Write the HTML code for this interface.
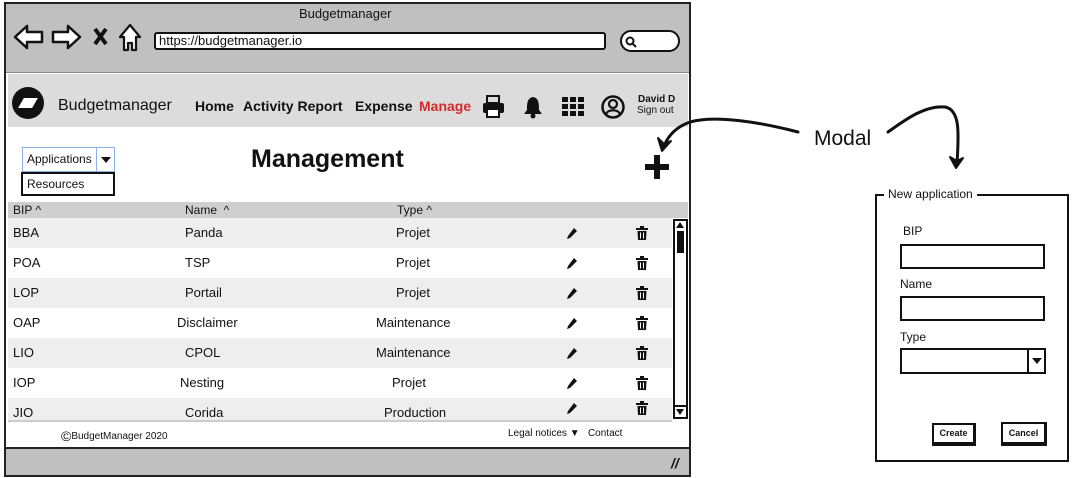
<!DOCTYPE html>
<html><head><meta charset="utf-8"><style>
*{margin:0;padding:0;box-sizing:border-box}
body{width:1073px;height:478px;background:#fff;position:relative;overflow:hidden;font-family:"Liberation Sans",sans-serif;color:#111}
.a{position:absolute}
.t{position:absolute;font-size:13px;white-space:nowrap}
.nav{position:absolute;font-size:14px;font-weight:bold;top:98px}
</style></head><body>
<div class="a" style="left:4px;top:2px;width:687px;height:475px;border:2px solid #222;background:#c0c0c0"></div>
<div class="t" style="left:299px;top:6px;font-size:13px">Budgetmanager</div>
<svg class="a" style="left:12px;top:20px" width="135" height="34" viewBox="0 0 135 34">
<path d="M3 17 L15 6 V12 H30 V22 H15 V28 Z" fill="#fff" stroke="#111" stroke-width="2.5" stroke-linejoin="round"/>
<path d="M68 17 L56 6 V12 H41 V22 H56 V28 Z" fill="#fff" stroke="#111" stroke-width="2.5" stroke-linejoin="round"/>
<path d="M83 9 L94 24 M94 9 L83 24" stroke="#111" stroke-width="4"/>
<path d="M108 17 L118 5 L128 17 H124 V30 H120 V23 H116 V30 H112 V17 Z" fill="#fff" stroke="#111" stroke-width="2.2" stroke-linejoin="round"/>
</svg>
<div class="a" style="left:154px;top:32px;width:452px;height:18px;border:2px solid #111;border-radius:3px;background:#fff"></div>
<div class="t" style="left:159px;top:33px;font-size:13px">https://budgetmanager.io</div>
<div class="a" style="left:620px;top:30px;width:60px;height:22px;border:2px solid #111;border-radius:11px;background:#fff"></div>
<svg class="a" style="left:624px;top:35px" width="14" height="14"><circle cx="6" cy="6" r="3.5" fill="none" stroke="#111" stroke-width="2"/><path d="M8.5 8.5 L12 12" stroke="#111" stroke-width="2"/></svg>
<div class="a" style="left:6px;top:72px;width:683px;height:376px;background:#fff;border-top:1px solid #888"></div>
<div class="a" style="left:8px;top:74px;width:680px;height:53px;background:#dcdcdc"></div>
<div class="a" style="left:12px;top:87px;width:32px;height:32px;border-radius:50%;background:#111"></div>
<div class="a" style="left:21px;top:98px;width:14px;height:10px;background:#fff;transform:skewX(-30deg)"></div>
<div class="t" style="left:58px;top:97px;font-size:16px">Budgetmanager</div>
<div class="nav" style="left:195px">Home</div>
<div class="nav" style="left:243px">Activity Report</div>
<div class="nav" style="left:355px">Expense</div>
<div class="nav" style="left:419px;color:#d42a2a">Manage</div>
<svg class="a" style="left:482px;top:94px" width="200" height="28">
<rect x="5" y="2" width="12" height="7" fill="none" stroke="#111" stroke-width="2"/><rect x="1" y="9" width="21" height="10" rx="2" fill="#111"/><rect x="5" y="15" width="12" height="8" fill="#fff" stroke="#111" stroke-width="2"/>
<path d="M51 1 L51 3 C45 4 45 10 45 16 L42 20 H60 L57 16 C57 10 57 4 51 3Z" fill="#111"/><circle cx="51" cy="22" r="2.5" fill="#111"/>
<g fill="#111"><rect x="80" y="3" width="6" height="5"/><rect x="88" y="3" width="6" height="5"/><rect x="96" y="3" width="6" height="5"/><rect x="80" y="10" width="6" height="5"/><rect x="88" y="10" width="6" height="5"/><rect x="96" y="10" width="6" height="5"/><rect x="80" y="17" width="6" height="5"/><rect x="88" y="17" width="6" height="5"/><rect x="96" y="17" width="6" height="5"/></g>
<circle cx="131" cy="13" r="10.5" fill="none" stroke="#111" stroke-width="2.5"/><circle cx="131" cy="10" r="4" fill="none" stroke="#111" stroke-width="2.2"/><path d="M124 20 C126 15 136 15 138 20" fill="none" stroke="#111" stroke-width="2.2"/>
</svg>
<div class="t" style="left:638px;top:94px;font-size:10px;font-weight:bold">David D</div>
<div class="t" style="left:637px;top:105px;font-size:10px">Sign out</div>
<div class="a" style="left:22px;top:147px;width:93px;height:25px;border:1px solid #8eb0ea;background:#fff"></div>
<div class="a" style="left:96px;top:147px;width:1px;height:25px;background:#8eb0ea"></div>
<div class="t" style="left:27px;top:152px;font-size:12px;width:68px;overflow:hidden">Applications</div>
<div class="a" style="left:101px;top:157px;border-left:5px solid transparent;border-right:5px solid transparent;border-top:6px solid #111"></div>
<div class="a" style="left:21px;top:172px;width:94px;height:24px;border:2px solid #111;background:#fff"></div>
<div class="t" style="left:27px;top:177px;font-size:12px">Resources</div>
<div class="t" style="left:251px;top:145px;font-size:25px;font-weight:bold">Management</div>
<div class="a" style="left:645px;top:164px;width:24px;height:6px;background:#111"></div>
<div class="a" style="left:654px;top:155px;width:6px;height:24px;background:#111"></div>
<div class="a" style="left:8px;top:202px;width:680px;height:16px;background:#cfcfcf"></div>
<div class="t" style="left:13px;top:203px;font-size:12px">BIP ^</div>
<div class="t" style="left:185px;top:203px;font-size:12px">Name &nbsp;^</div>
<div class="t" style="left:397px;top:203px;font-size:12px">Type ^</div>
<div class="a" style="left:8px;top:218px;width:664px;height:30px;background:#eee"></div>
<div class="a" style="left:8px;top:278px;width:664px;height:30px;background:#eee"></div>
<div class="a" style="left:8px;top:338px;width:664px;height:30px;background:#eee"></div>
<div class="a" style="left:8px;top:398px;width:664px;height:22px;background:#eee"></div>
<div class="t" style="left:13px;top:225px">BBA</div><div class="t" style="left:185px;top:225px">Panda</div><div class="t" style="left:396px;top:225px">Projet</div>
<div class="t" style="left:13px;top:255px">POA</div><div class="t" style="left:185px;top:255px">TSP</div><div class="t" style="left:396px;top:255px">Projet</div>
<div class="t" style="left:13px;top:285px">LOP</div><div class="t" style="left:185px;top:285px">Portail</div><div class="t" style="left:396px;top:285px">Projet</div>
<div class="t" style="left:13px;top:315px">OAP</div><div class="t" style="left:177px;top:315px">Disclaimer</div><div class="t" style="left:376px;top:315px">Maintenance</div>
<div class="t" style="left:13px;top:345px">LIO</div><div class="t" style="left:185px;top:345px">CPOL</div><div class="t" style="left:376px;top:345px">Maintenance</div>
<div class="t" style="left:13px;top:375px">IOP</div><div class="t" style="left:180px;top:375px">Nesting</div><div class="t" style="left:392px;top:375px">Projet</div>
<div class="t" style="left:13px;top:405px">JIO</div><div class="t" style="left:185px;top:405px">Corida</div><div class="t" style="left:384px;top:405px">Production</div>
<svg class="a" style="left:560px;top:218px" width="100" height="202">
<defs><g id="p"><path d="M7 2 L10 5 L3 12 L0 13 L1 10 Z" fill="#111"/></g>
<g id="d"><rect x="0" y="2" width="12" height="2" fill="#111"/><rect x="4" y="0" width="4" height="2" fill="#111"/><path d="M1.5 5 H10.5 L10 14 H2 Z" fill="#111"/><path d="M4.5 6.5V12.5M7.5 6.5V12.5" stroke="#fff" stroke-width="1"/></g></defs>
<use href="#p" x="7" y="8"/><use href="#d" x="76" y="8"/>
<use href="#p" x="7" y="38"/><use href="#d" x="76" y="38"/>
<use href="#p" x="7" y="68"/><use href="#d" x="76" y="68"/>
<use href="#p" x="7" y="98"/><use href="#d" x="76" y="98"/>
<use href="#p" x="7" y="128"/><use href="#d" x="76" y="128"/>
<use href="#p" x="7" y="158"/><use href="#d" x="76" y="158"/>
<use href="#p" x="7" y="183"/><use href="#d" x="76" y="183"/>
</svg>
<div class="a" style="left:673px;top:219px;width:15px;height:200px;border:2px solid #111;background:#fff"></div>
<div class="a" style="left:676px;top:222px;border-left:4px solid transparent;border-right:4px solid transparent;border-bottom:6px solid #111"></div>
<div class="a" style="left:677px;top:231px;width:7px;height:22px;background:#111"></div>
<div class="a" style="left:673px;top:405px;width:15px;height:2px;background:#111"></div>
<div class="a" style="left:676px;top:409px;border-left:4px solid transparent;border-right:4px solid transparent;border-top:6px solid #111"></div>
<div class="a" style="left:8px;top:420px;width:664px;height:2px;background:#ccc"></div>
<div class="t" style="left:61px;top:428px;font-size:10px"><span style="font-size:14px;vertical-align:-2px">©</span>BudgetManager 2020</div>
<div class="t" style="left:508px;top:428px;font-size:10px">Legal notices ▼ &nbsp; Contact</div>
<div class="a" style="left:4px;top:447px;width:687px;height:2px;background:#222"></div>
<div class="t" style="left:671px;top:455px;font-size:14px;font-weight:bold;font-style:italic">//</div>
<svg class="a" style="left:0;top:0" width="1073" height="478">
<path d="M798 132 C760 122 715 115 690 122 C676 127 668 136 664 146" fill="none" stroke="#111" stroke-width="3" stroke-linecap="round"/>
<path d="M658 138 L662 151 L671 141 L664 144 Z" fill="#111" stroke="#111" stroke-width="2" stroke-linejoin="round"/>
<path d="M888 132 C905 120 925 105 945 107 C962 110 958 140 957 165" fill="none" stroke="#111" stroke-width="3" stroke-linecap="round"/>
<path d="M950 157 L956 168 L963 158 L957 161 Z" fill="#111" stroke="#111" stroke-width="2" stroke-linejoin="round"/>
</svg>
<div class="t" style="left:814px;top:127px;font-size:21px">Modal</div>
<div class="a" style="left:875px;top:194px;width:194px;height:268px;border:2px solid #111"></div>
<div class="t" style="left:884px;top:187px;font-size:12px;background:#fff;padding:0 4px">New application</div>
<div class="t" style="left:903px;top:224px;font-size:12px">BIP</div>
<div class="a" style="left:900px;top:244px;width:145px;height:25px;border:2px solid #111"></div>
<div class="t" style="left:900px;top:277px;font-size:12px">Name</div>
<div class="a" style="left:900px;top:296px;width:145px;height:25px;border:2px solid #111"></div>
<div class="t" style="left:900px;top:330px;font-size:12px">Type</div>
<div class="a" style="left:900px;top:348px;width:146px;height:26px;border:2px solid #111"></div>
<div class="a" style="left:1027px;top:348px;width:2px;height:26px;background:#111"></div>
<div class="a" style="left:1032px;top:358px;border-left:5px solid transparent;border-right:5px solid transparent;border-top:6px solid #111"></div>
<div class="a" style="left:932px;top:423px;width:44px;height:23px;border:2px solid #111;border-right-width:3px;border-bottom-width:4px;font-size:9px;font-weight:bold;text-align:center;line-height:17px">Create</div>
<div class="a" style="left:1001px;top:422px;width:46px;height:24px;border:2px solid #111;border-right-width:3px;border-bottom-width:4px;font-size:9px;font-weight:bold;text-align:center;line-height:18px">Cancel</div>
</body></html>
